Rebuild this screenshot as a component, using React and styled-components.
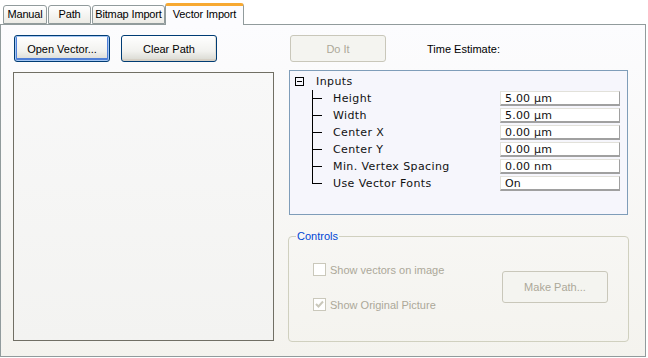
import React from "react";
import styled, { createGlobalStyle } from "styled-components";

const GlobalStyle = createGlobalStyle`
  html, body { margin: 0; padding: 0; background: #fff; }
  body { font-family: Tahoma, "Liberation Sans", sans-serif; font-size: 11px; }
`;

const Window = styled.div`
  width: 648px;
  height: 358px;
  background: #fff;
  overflow: hidden;
`;

const TabStrip = styled.div`
  display: flex;
  align-items: flex-end;
  height: 24px;
  padding-left: 3px;
  font-family: "Liberation Sans", Arial, sans-serif;
  font-size: 11px;
  letter-spacing: -0.15px;
`;

const Tab = styled.div`
  box-sizing: border-box;
  width: ${(p) => p.$w}px;
  height: ${(p) => (p.$active ? "22px" : "19px")};
  margin-bottom: ${(p) => (p.$active ? "-1px" : "0")};
  margin-left: ${(p) => (p.$active ? "-1px" : "0")};
  margin-right: ${(p) => (p.$active ? "0" : "1px")};
  padding-top: 2px;
  text-align: center;
  border: 1px solid #919b9c;
  border-bottom: ${(p) => (p.$active ? "none" : "1px solid #919b9c")};
  border-top: ${(p) => (p.$active ? "3px solid #f7a932" : "1px solid #919b9c")};
  border-radius: 3px 3px 0 0;
  background: ${(p) => (p.$active ? "#fcfcfe" : "linear-gradient(#ffffff, #ecebe6)")};
  color: #000;
  position: relative;
  z-index: ${(p) => (p.$active ? 2 : 0)};
  white-space: nowrap;
`;

const Panel = styled.div`
  box-sizing: border-box;
  width: 646px;
  height: 333px;
  border: 1px solid #919b9c;
  background: linear-gradient(#fcfcfe, #f4f3ee);
  display: grid;
  grid-template-columns: 261px 340px;
  column-gap: 14px;
  padding: 10px 0 0 12px;
  position: relative;
  z-index: 1;
`;

const Column = styled.div`
  display: flex;
  flex-direction: column;
`;

const ButtonRow = styled.div`
  display: flex;
  align-items: center;
  gap: ${(p) => p.$gap ?? 11}px;
  height: 27px;
  padding-left: ${(p) => p.$pad ?? 1}px;
`;

const Button = styled.button`
  box-sizing: border-box;
  flex: none;
  width: ${(p) => p.$w || 96}px;
  height: ${(p) => p.$h || 27}px;
  margin-top: ${(p) => p.$top || 0}px;
  border: 1px solid ${(p) => (p.disabled ? "#c9c7ba" : "#003c74")};
  border-radius: 3px;
  background: ${(p) =>
    p.disabled ? "#f4f4f0" : "linear-gradient(#ffffff 0%, #f2f2ef 60%, #d8d8d0 100%)"};
  box-shadow: ${(p) =>
    p.disabled
      ? "none"
      : p.$focus
      ? "inset 0 0 0 1px #a6c7f3, inset 0 -1px 0 2px #4f7fd8"
      : "inset 0 -2px 0 #d6d0c5, inset -1px 0 0 #e3e0d6"};
  color: ${(p) => (p.disabled ? "#aca899" : "#000")};
  font-family: "Liberation Sans", Arial, sans-serif;
  font-size: 11px;
  padding: 0;
`;

const Canvas = styled.div`
  box-sizing: border-box;
  margin-top: 10px;
  width: 261px;
  height: 269px;
  border: 1px solid #716f64;
  background: linear-gradient(#f8f8f8, #f3f3f1);
`;

const TimeLabel = styled.span`
  margin-left: 41px;
  font-family: "Liberation Sans", Arial, sans-serif;
  font-size: 11px;
  color: #000;
`;

const Grid = styled.div`
  box-sizing: border-box;
  margin-top: 8px;
  margin-left: 1px;
  width: 339px;
  height: 145px;
  border: 1px solid #7f9db9;
  background: #f6f6fc;
  padding: 2px 0 0 5px;
  font-family: "DejaVu Sans", Verdana, sans-serif;
  font-size: 11px;
  letter-spacing: 0.4px;
  color: #111;
`;

const GroupRow = styled.div`
  display: flex;
  align-items: center;
  height: 17px;
`;

const Expander = styled.div`
  box-sizing: border-box;
  width: 9px;
  height: 9px;
  border: 1px solid #000;
  position: relative;
  margin-right: 12px;
  &::after {
    content: "";
    position: absolute;
    left: 1px;
    right: 1px;
    top: 3px;
    height: 1px;
    background: #000;
  }
`;

const Row = styled.div`
  display: flex;
  align-items: center;
  height: 17px;
`;

const Branch = styled.div`
  flex: none;
  width: 11px;
  height: 17px;
  margin-left: 17px;
  margin-right: 10px;
  position: relative;
  &::before {
    content: "";
    position: absolute;
    left: 0;
    top: 0;
    width: 1px;
    height: ${(p) => (p.$last ? "9px" : "17px")};
    background: #000;
  }
  &::after {
    content: "";
    position: absolute;
    left: 0;
    top: 8px;
    width: 10px;
    height: 1px;
    background: #000;
  }
`;

const Label = styled.span`
  width: 167px;
  white-space: nowrap;
`;

const Value = styled.div`
  box-sizing: border-box;
  width: 120px;
  height: 15px;
  background: #fff;
  border: 1px solid #e2e1da;
  border-right-color: #a0a0a0;
  border-bottom: 2px solid #a0a0a0;
  padding-left: 4px;
  line-height: 13px;
  letter-spacing: 0.2px;
  white-space: nowrap;
`;

const GroupBox = styled.fieldset`
  box-sizing: border-box;
  margin: 15px 0 0 0;
  width: 341px;
  height: 112px;
  border: 1px solid #d0d0bf;
  border-radius: 4px;
  padding: 0;
  font-family: "Liberation Sans", Arial, sans-serif;
  font-size: 11px;
`;

const Legend = styled.legend`
  color: #0046d5;
  padding: 0 1px;
  margin-left: 7px;
  line-height: 13px;
`;

const GroupContent = styled.div`
  display: flex;
  align-items: flex-start;
  padding: 20px 0 0 24px;
`;

const Checks = styled.div`
  display: flex;
  flex-direction: column;
  gap: 22px;
  width: 189px;
`;

const Check = styled.label`
  display: flex;
  align-items: center;
  gap: 4px;
  height: 13px;
  color: #aca899;
  white-space: nowrap;
`;

const Box = styled.span`
  box-sizing: border-box;
  width: 13px;
  height: 13px;
  border: 1px solid #cac8bb;
  background: #fff;
  display: flex;
  align-items: center;
  justify-content: center;
`;

const rows = [
  ["Height", "5.00 µm"],
  ["Width", "5.00 µm"],
  ["Center X", "0.00 µm"],
  ["Center Y", "0.00 µm"],
  ["Min. Vertex Spacing", "0.00 nm"],
  ["Use Vector Fonts", "On"],
];

export default function App() {
  return (
    <Window>
      <GlobalStyle />
      <TabStrip>
        <Tab $w={44}>Manual</Tab>
        <Tab $w={43}>Path</Tab>
        <Tab $w={73}>Bitmap Import</Tab>
        <Tab $w={79} $active>Vector Import</Tab>
      </TabStrip>
      <Panel>
        <Column>
          <ButtonRow>
            <Button $focus>Open Vector...</Button>
            <Button>Clear Path</Button>
          </ButtonRow>
          <Canvas />
        </Column>
        <Column>
          <ButtonRow $pad={2} $gap={0}>
            <Button disabled $w={96}>Do It</Button>
            <TimeLabel>Time Estimate:</TimeLabel>
          </ButtonRow>
          <Grid>
            <GroupRow>
              <Expander />
              <span>Inputs</span>
            </GroupRow>
            {rows.map(([k, v], i) => (
              <Row key={k}>
                <Branch $last={i === rows.length - 1} />
                <Label>{k}</Label>
                <Value>{v}</Value>
              </Row>
            ))}
          </Grid>
          <GroupBox>
            <Legend>Controls</Legend>
            <GroupContent>
              <Checks>
                <Check>
                  <Box />
                  Show vectors on image
                </Check>
                <Check>
                  <Box>
                    <svg width="9" height="9" viewBox="0 0 9 9">
                      <path d="M1 4 L3.5 6.5 L8 1.5" fill="none" stroke="#cac8bb" strokeWidth="2" />
                    </svg>
                  </Box>
                  Show Original Picture
                </Check>
              </Checks>
              <Button disabled $w={106} $h={32} $top={8}>
                Make Path...
              </Button>
            </GroupContent>
          </GroupBox>
        </Column>
      </Panel>
    </Window>
  );
}
